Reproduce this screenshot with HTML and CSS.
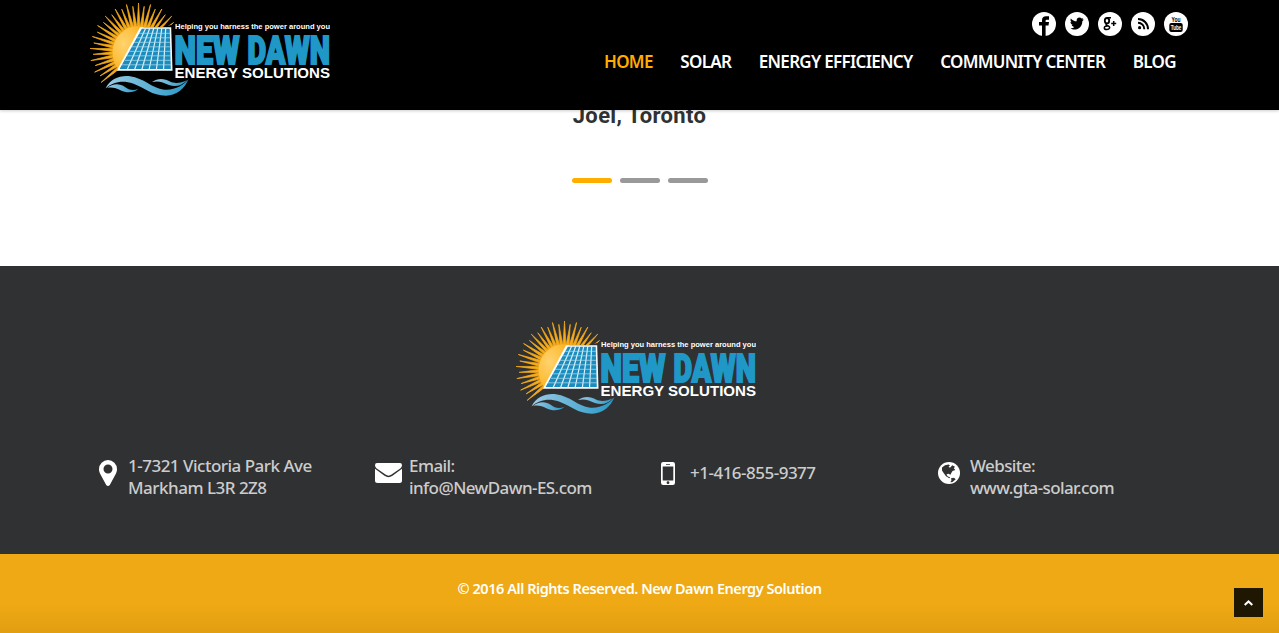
FILE: index.html
```
<!DOCTYPE html>
<html lang="en">
<head>
<meta charset="utf-8">
<title>New Dawn Energy Solutions</title>
<link rel="stylesheet" href="styles.css">
</head>
<body>
<svg class="defs" aria-hidden="true">
  <defs>
    <radialGradient id="sun" cx=".35" cy=".4" r=".7"><stop offset="0" stop-color="#ffd36e"/><stop offset=".6" stop-color="#fdc040"/><stop offset="1" stop-color="#f9ae1c"/></radialGradient>
    <linearGradient id="wave" x1="0" x2="1"><stop offset="0" stop-color="#9ccbe3"/><stop offset=".5" stop-color="#62b2d6"/><stop offset="1" stop-color="#2797c6"/></linearGradient>
    <clipPath id="sky"><path d="M0 0H90V20L72 24H50L27 68L8 88H0Z"/></clipPath>
    <symbol id="logo" viewBox="0 0 240 94">
      <g clip-path="url(#sky)">
        <g id="rays" fill="#f5ab1b"></g>
      </g>
      <path fill="url(#sun)" d="M54 24A25.500 25.500 0 0 0 22.500 48.500Q22.500 60 29 67L53 25Z"/>
      <path fill="#fff" d="M50 24.200H81.200L82.500 67.700H26.800Z"/>
      <path fill="#1b8cbe" d="M51.800 25.800H79.700L80.800 66H29.600Z"/>
      <path fill="none" stroke="#d9f0f8" stroke-width="1.200" d="M55.700 25L37 67M59.800 25L44.400 67M63.800 25L51.700 67M67.800 25L59 67M71.800 25L66.300 67M75.700 25L73.500 67"/>
      <path fill="none" stroke="#b5dff0" stroke-width=".7" d="M49 30.300H80M47 34.800H80M44 39.300H80M42 43.800H80M39 48.300H81M37 52.800H81M35 57.300H81M32 61.800H81"/>
      <path fill="url(#wave)" d="M15.500 85.500C20 76 30 72 40 73.200C54 75 62 85 73 86.500C84 88 94 82 98.500 76C95 85 87 92.700 76 92.700C62 92.700 54 84.500 43 80.500C33 77 23 78.500 15.500 85.500Z"/>
      <path fill="url(#wave)" d="M17 85C23 80 30 80.500 35 84C39 87 43 88 48.500 85.800C43 90.500 36 90 31 87.500C26 85 22 84 17 85Z"/>
      <path fill="url(#wave)" d="M62 79C68 74.500 75 75.500 80 78.500C85 81 91 80 97.500 77C92 82.500 86 84.500 79 82C73 79.500 69 77.500 62 79Z"/>
      <text class="logo-tag" x="85" y="26.200" textLength="155" lengthAdjust="spacingAndGlyphs">Helping you harness the power around you</text>
      <text class="logo-name" x="84.500" y="61" textLength="65" lengthAdjust="spacingAndGlyphs">NEW</text>
      <text class="logo-name" x="157.500" y="61" textLength="82.500" lengthAdjust="spacingAndGlyphs">DAWN</text>
      <text class="logo-sub" x="84.500" y="74.700" textLength="155.500" lengthAdjust="spacingAndGlyphs">ENERGY SOLUTIONS</text>
    </symbol>
  </defs>
</svg>

<header class="header">
  <div class="header-inner">
    <svg class="logo"><use href="#logo"/></svg>
    <div class="header-side">
      <div class="social">
        <svg viewBox="0 0 24 24"><circle cx="12" cy="12" r="12" fill="#fff"/><path d="M10 24V13.500H7V10H10V8.500C10 5.700 11.500 4.300 14 4.300H17V7.700H15C14 7.700 13.600 8.100 13.600 9V10H17L16.500 13.500H13.600V24Z"/></svg>
        <svg viewBox="0 0 24 24"><circle cx="12" cy="12" r="12" fill="#fff"/><path d="M18.800 7.700L17.300 9.200C17.500 14 13.800 17.600 9.500 17.600C8 17.600 6.500 17.100 5.300 16.300C7 16.400 8.400 16 9.400 15C8 14.900 7.100 14.100 6.700 13H7.800C6.300 12.500 5.500 11.300 5.500 10L6.700 10.300C5.400 9.200 5.200 7.700 5.900 6.400C7.400 8.200 9.300 9.200 11.700 9.300C11.200 7.200 12.700 5.600 14.500 5.600C15.300 5.600 16 5.900 16.500 6.500L18.200 5.900L17.300 7.300Z"/></svg>
        <svg viewBox="0 0 24 24"><circle cx="12" cy="12" r="12" fill="#fff"/><g fill="none" stroke="#000"><ellipse cx="9" cy="8.700" rx="2.200" ry="2.700" stroke-width="1.800"/><path stroke-width="1.500" d="M9 5.700H13M9 11.500Q7 12.600 9.300 13.500Q12.300 14.600 11.500 16.300C10.700 18 6.300 17.900 6.300 15.900C6.300 14.300 8.300 13.900 9.800 14M13.200 11.500H18.200M15.700 9V14"/></g></svg>
        <svg viewBox="0 0 24 24"><circle cx="12" cy="12" r="12" fill="#fff"/><circle cx="8.600" cy="15.700" r="1.600"/><path fill="none" stroke="#000" stroke-width="2" d="M7 10.700A6.300 6.300 0 0 1 13.300 17.200M7 7A10 10 0 0 1 17 17.200"/></svg>
        <svg viewBox="0 0 24 24"><circle cx="12" cy="12" r="12" fill="#fff"/><rect x="5.300" y="11" width="13.400" height="9" rx="2"/><text class="yt" x="7.500" y="10" textLength="9" lengthAdjust="spacingAndGlyphs">You</text><text class="yt yt-inv" x="6.700" y="18.200" textLength="10.600" lengthAdjust="spacingAndGlyphs">Tube</text></svg>
      </div>
      <nav class="nav">
        <a class="active">HOME</a><a>SOLAR</a><a>ENERGY EFFICIENCY</a><a>COMMUNITY CENTER</a><a>BLOG</a>
      </nav>
    </div>
  </div>
</header>

<section class="quote">
  <h3>Joel, Toronto</h3>
  <div class="pager"><i class="on"></i><i></i><i></i></div>
</section>

<footer class="footer">
  <svg class="logo"><use href="#logo"/></svg>
  <div class="contacts">
    <div class="contact">
      <svg width="18" height="26" viewBox="0 0 18 26"><path fill="#fff" fill-rule="evenodd" d="M9 0A9 9 0 0 0 0 9C0 11 .5 12.300 1 13.500L7.200 25Q9 27 10.800 25L17 13.500C17.500 12.300 18 11 18 9A9 9 0 0 0 9 0ZM9 4.500A4.500 4.500 0 1 1 9 13.500A4.500 4.500 0 1 1 9 4.500Z"/></svg>
      <p>1-7321 Victoria Park Ave<br>Markham L3R 2Z8</p>
    </div>
    <div class="contact mail">
      <svg width="27" height="20" viewBox="0 0 27 20"><path fill="#fff" d="M2 0H25Q27 0 27 2.200C27 4 25.500 5.300 24.500 6L16.500 11.600C14.500 13 12.500 13 10.500 11.600L2.500 6C1.500 5.300 0 4 0 2.200Q0 0 2 0ZM0 5.800L9.500 12.800C12.300 14.700 14.700 14.700 17.500 12.800L27 5.800V17.500Q27 20 24.500 20H2.500Q0 20 0 17.500Z"/></svg>
      <p>Email:<br>info@NewDawn-ES.com</p>
    </div>
    <div class="contact phone">
      <svg width="14" height="23" viewBox="0 0 14 23"><rect width="14" height="23" rx="2.200" fill="#fff"/><path fill="#303133" d="M1.700 4.500H12.300V18.500H1.700ZM5 2H9V2.800H5Z"/><circle cx="7" cy="20.700" r="1.400" fill="#303133"/></svg>
      <p>+1-416-855-9377</p>
    </div>
    <div class="contact web">
      <svg width="22" height="22" viewBox="0 0 22 22"><circle cx="11" cy="11" r="11" fill="#fff"/><path fill="#303133" d="M4 5.500L7 3.300L10.500 2.500L12 3.600L10.500 4.800L12 5.800L14.300 3.300L17 4.700L15.800 6.300L17.300 8L14.500 9L13.300 11L12.500 12.800L10.500 11.700L8.500 12.300L9.500 14.300L12.300 15.600L11.300 16.300L8 14.300L5.300 10.500L4 8.500ZM13 16.200L16 15.800L17.700 17.200L14.500 20L12.300 20.300L13.500 18.300Z"/></svg>
      <p>Website:<br>www.gta-solar.com</p>
    </div>
  </div>
</footer>

<div class="copyright">© 2016 All Rights Reserved. New Dawn Energy Solution</div>
<a class="to-top" aria-label="Back to top"><svg width="9" height="6" viewBox="0 0 9 6"><path fill="none" stroke="#fff" stroke-width="2" d="M.7 5L4.500 1.400L8.300 5"/></svg></a>
<script src="logo.js"></script>
</body>
</html>
```
FILE: styles.css
```
* { box-sizing: border-box; }
body { margin: 0; height: 633px; overflow: hidden; background: #fff; font-family: "Noto Sans", sans-serif; font-weight: 500; font-size: 17px; letter-spacing: -.5px; }
h3, p { margin: 0; }
.defs { position: absolute; width: 0; height: 0; }
.logo { display: block; width: 240px; height: 94px; }
.logo-tag { font: 700 7.6px "Liberation Sans", sans-serif; letter-spacing: 0; fill: #fff; }
.logo-name { font: 900 39px Roboto, sans-serif; letter-spacing: 0; fill: #1f98c7; stroke: #1f98c7; stroke-width: 2px; }
.logo-sub { font: 700 15px "Liberation Sans", sans-serif; letter-spacing: 0; fill: #fff; }

.header { position: relative; z-index: 1; height: 110px; background: #000; box-shadow: 0 1px 3px rgba(0,0,0,.2); }
.header-inner { display: flex; justify-content: space-between; padding: 3px 91px 0 90px; }
.header-side { width: 584px; padding-top: 9px; }
.social { display: flex; justify-content: flex-end; gap: 9.100px; }
.social svg { width: 24px; height: 24px; }
.yt { font: 700 7.500px "Liberation Sans", sans-serif; letter-spacing: 0; }
.yt-inv { fill: #fff; }
.nav { display: flex; gap: 27.600px; margin-top: 13px; line-height: 25px; font-weight: 600; letter-spacing: -.7px; color: #fff; white-space: nowrap; }
.nav .active { color: #ffae00; }

.quote { display: flow-root; height: 156px; }
.quote h3 { height: 24px; margin-top: -6px; text-align: center; font: 700 22px/24px Roboto, sans-serif; letter-spacing: .35px; color: #303133; }
.pager { display: flex; justify-content: center; gap: 8px; padding: 50px 0 0 1px; }
.pager i { width: 40px; height: 5px; border-radius: 3px; background: #999; }
.pager .on { background: #ffae00; }

.footer { height: 288px; padding-top: 55px; background: #303133; color: #ccc; }
.footer .logo { margin-left: 516px; }
.contacts { display: grid; grid-template-columns: 276px 286px 277px auto; padding: 40px 0 0 99px; line-height: 22px; }
.contact { display: flex; align-items: center; gap: 11px; height: 44px; white-space: nowrap; }
.contact svg { flex: none; margin-top: -8px; }
.contact:first-child svg { margin-top: -9px; }
.mail { gap: 7px; letter-spacing: -.57px; }
.phone { gap: 15px; }
.phone p { letter-spacing: -.5px; }
.web { gap: 10px; letter-spacing: -.6px; }

.copyright { height: 79px; padding-top: 22px; text-align: center; font-size: 14.500px; font-weight: 600; line-height: 24px; letter-spacing: -.44px; color: #fff; background: linear-gradient(transparent 50px, rgba(130,80,0,.12)), #efa914; }
.to-top { position: absolute; left: 1234px; top: 588px; width: 29px; height: 29px; display: flex; align-items: center; justify-content: center; background: #1f1702; }
.phone p { margin-top: -8px; }
```
FILE: logo.js
```
// Tapered rays, fanned round the sun's centre with alternating lengths.
const rays = document.getElementById('rays');
for (let i = 0; i < 50; i++) {
  const ray = document.createElementNS('http://www.w3.org/2000/svg', 'path');
  const tip = i % 2 ? 3 : 0;
  ray.setAttribute('d', `M47 24L48.5 ${tip}L50 24Z`);
  ray.setAttribute('transform', `rotate(${i * 7.2} 48.5 48.5)`);
  ray.setAttribute('stroke', '#f5ab1b');
  ray.setAttribute('stroke-width', '.7');
  rays.append(ray);
}
```
